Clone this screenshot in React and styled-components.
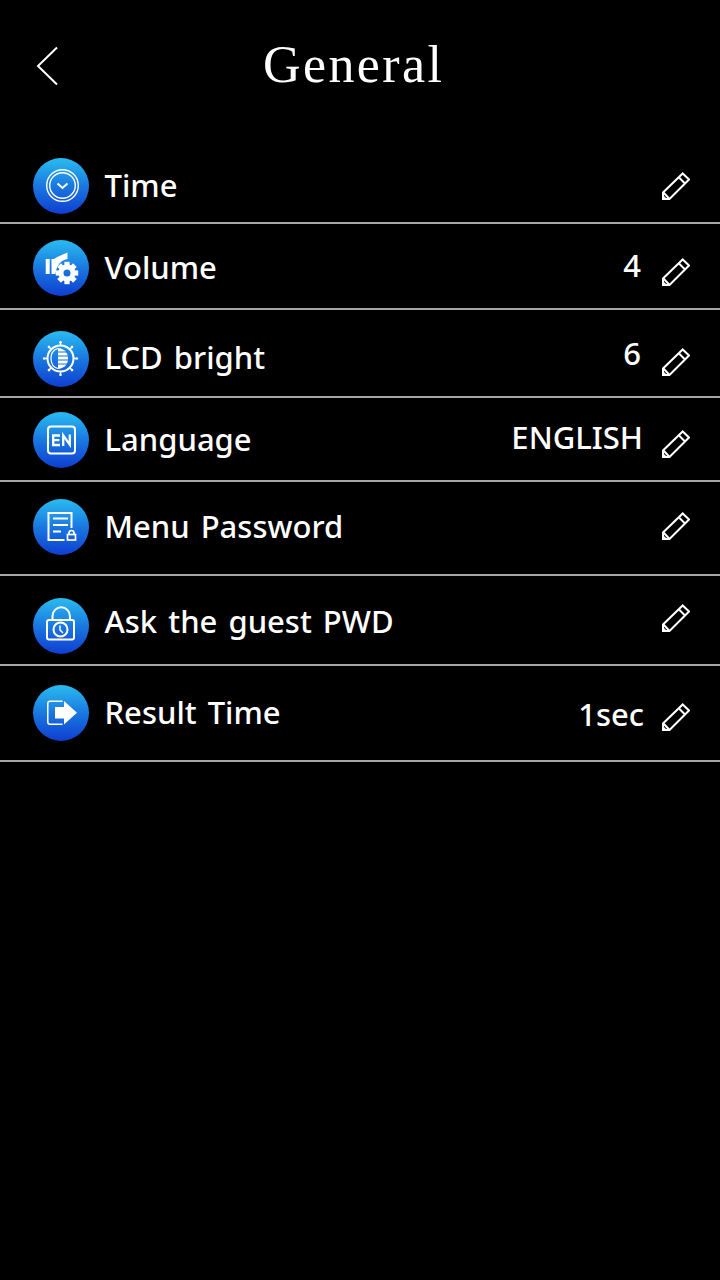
import * as React from "react"
import styled, { createGlobalStyle } from "styled-components"

const Global = createGlobalStyle`
    html, body {
        margin: 0;
        padding: 0;
        background: #000;
    }
`

const Screen = styled.div`
    width: 720px;
    height: 1280px;
    background: #000;
    color: #fff;
    font-family: "Noto Sans", "Open Sans", sans-serif;
    overflow: hidden;
`

const Header = styled.header`
    height: 140px;
    display: flex;
    align-items: flex-start;
    padding-left: 36px;
`

const BackIcon = styled.svg`
    width: 22px;
    height: 40px;
    margin-top: 46px;
    flex: none;
`

const Title = styled.h1`
    margin: 35px 0 0 205px;
    font-family: "Liberation Serif", serif;
    font-weight: 400;
    font-size: 52px;
    line-height: 60px;
    letter-spacing: 2.4px;
    white-space: nowrap;
`

const Row = styled.div`
    height: ${p => p.$height}px;
    border-bottom: 2px solid #a6a6a6;
    display: flex;
    align-items: flex-start;
    padding: 0 30px 0 32.5px;
`

const Badge = styled.div`
    width: 56px;
    height: 56px;
    margin-top: ${p => p.$top}px;
    border-radius: 50%;
    background: linear-gradient(180deg, #2abcf0 0%, #1a78e0 50%, #0f3ed0 100%);
    flex: none;
    svg {
        display: block;
        width: 56px;
        height: 56px;
    }
`

const Label = styled.span`
    margin: ${p => p.$top}px 0 0 16px;
    font-size: 31px;
    font-weight: 500;
    line-height: 40px;
    word-spacing: 3px;
    white-space: nowrap;
`

const Value = styled.span`
    margin: ${p => p.$top}px ${p => p.$gap}px 0 auto;
    font-size: 31px;
    font-weight: 500;
    line-height: 40px;
    white-space: nowrap;
`

const Pencil = styled.svg`
    width: 28px;
    height: 28px;
    margin-top: ${p => p.$top}px;
    margin-left: ${p => (p.$alone ? "auto" : "0")};
    flex: none;
`

const line = { fill: "none", stroke: "#fff", strokeWidth: 2 }

const ClockIcon = () => (
    <svg viewBox="0 0 56 56">
        <circle cx="29.5" cy="27.5" r="15.8" {...line} strokeWidth="1.4" />
        <circle cx="29.5" cy="27.5" r="12.8" {...line} strokeWidth="1.4" />
        <path d="M24.5 25.5 L29.5 30 L34.5 25.5" {...line} />
    </svg>
)

const gearTeeth = [0, 45, 90, 135, 180, 225, 270, 315]

const VolumeIcon = () => (
    <svg viewBox="0 0 56 56">
        <path d="M12.7 19 H16.7 V34 H12.7 Z" fill="#fff" />
        <path d="M18.5 19 H21 C24 17 29 15 34.5 12.5 V19 C27 20.5 23.5 26 22.5 34 H18.5 Z" fill="#fff" />
        <g transform="translate(34 33)">
            {gearTeeth.map(a => (
                <rect key={a} x="-2.6" y="-11.2" width="5.2" height="5" fill="#fff" transform={`rotate(${a})`} />
            ))}
            <circle r="6" fill="none" stroke="#fff" strokeWidth="5" />
        </g>
    </svg>
)

const sunRays = [0, 45, 90, 135, 180, 225, 270, 315]

const BrightIcon = () => (
    <svg viewBox="0 0 56 56">
        {sunRays.map(a => (
            <g key={a} transform={`rotate(${a} 27.5 27.5)`}>
                <path d="M27.5 14.5 V11.5" {...line} strokeWidth="1.5" />
                <circle cx="27.5" cy="11.2" r="1.3" fill="#fff" />
            </g>
        ))}
        <circle cx="27.5" cy="27.5" r="13" {...line} />
        <path d="M25 17.5 C19 19 18 23 18 27.5 C18 32 19 36 25 37.5" {...line} strokeWidth="1.2" />
        <path d="M25 17 C33 18 35 23 35 27.5 C35 32 33 37 25 38 Z" fill="#fff" />
        <path d="M25 21 H35 M25 25 H35 M25 29 H35 M25 33 H35" {...line} stroke="#1a70de" strokeWidth="1.2" />
    </svg>
)

const LangIcon = () => (
    <svg viewBox="0 0 56 56">
        <rect x="15" y="14.5" width="27" height="27" rx="3" {...line} />
        <path d="M27 23.5 H20.2 V33 H27 M20.2 28.2 H26.4" {...line} strokeWidth="2.3" />
        <path d="M30.2 34 V23.4 L36.8 32.6 V22.5" {...line} strokeWidth="2.3" />
    </svg>
)

const PasswordIcon = () => (
    <svg viewBox="0 0 56 56">
        <path d="M31.5 41 H15.5 V14 H38.5 V29" {...line} />
        <path d="M20 19.5 H35 M20 26 H35 M20 32.5 H28" {...line} />
        <rect x="34.5" y="35.5" width="8" height="5.5" {...line} strokeWidth="1.7" />
        <path d="M36 35.5 V34 A2.5 2.5 0 0 1 41 34 V35.5" {...line} strokeWidth="1.7" />
    </svg>
)

const GuestIcon = () => (
    <svg viewBox="0 0 56 56">
        <path d="M19.5 22 V18 A8.7 8.7 0 0 1 36.9 18 V22" {...line} />
        <rect x="14" y="22" width="27" height="19.5" rx="2" {...line} />
        <circle cx="27.5" cy="31.5" r="7" {...line} />
        <path d="M27 27.5 V32 L30 35" {...line} strokeWidth="1.5" />
    </svg>
)

const ResultIcon = () => (
    <svg viewBox="0 0 56 56">
        <path d="M29.5 16.3 H17 Q14.8 16.3 14.8 18.5 V37 Q14.8 39.2 17 39.2 H29.5" {...line} strokeWidth="1.5" />
        <path d="M22 22 H31 V16 L44 27.7 L31 39.5 V33.5 H22 Z" fill="#fff" />
    </svg>
)

const BackChevron = () => (
    <BackIcon viewBox="0 0 22 40">
        <path d="M21 1.5 L2 20 L21 38.5" fill="none" stroke="#fff" strokeWidth="2" />
    </BackIcon>
)

const EditPencil = ({ top, alone }) => (
    <Pencil viewBox="0 0 28 28" $top={top} $alone={alone}>
        <path d="M1 27 V20.5 L20.7 1.5 L27 7.5 L7.5 27 Z" fill="none" stroke="#fff" strokeWidth="2" />
        <path d="M17 5.5 L23 11.5 M1.5 20.5 L7.5 27" fill="none" stroke="#fff" strokeWidth="2" />
        <path d="M1 27 V23 L5 27 Z" fill="#fff" />
    </Pencil>
)

const items = [
    { name: "Time", Icon: ClockIcon, height: 82, iconTop: 18, labelTop: 25, penTop: 32 },
    { name: "Volume", Icon: VolumeIcon, height: 84, iconTop: 16, labelTop: 23, value: "4", valueTop: 21, valueGap: 21, penTop: 34 },
    { name: "LCD bright", Icon: BrightIcon, height: 86, iconTop: 21, labelTop: 27, value: "6", valueTop: 23, valueGap: 21, penTop: 38 },
    { name: "Language", Icon: LangIcon, height: 82, iconTop: 14, labelTop: 21, value: "ENGLISH", valueTop: 19, valueGap: 19, penTop: 32 },
    { name: "Menu Password", Icon: PasswordIcon, height: 92, iconTop: 17, labelTop: 24, penTop: 30 },
    { name: "Ask the guest PWD", Icon: GuestIcon, height: 88, iconTop: 22, labelTop: 25, penTop: 28 },
    { name: "Result Time", Icon: ResultIcon, height: 94, iconTop: 19, labelTop: 26, value: "1sec", valueTop: 28, valueGap: 18, penTop: 37 },
]

const App = () => {
    return (
        <>
            <Global />
            <Screen>
                <Header>
                    <BackChevron />
                    <Title>General</Title>
                </Header>
                {items.map(({ name, Icon, height, iconTop, labelTop, value, valueTop, valueGap, penTop }) => (
                    <Row key={name} $height={height}>
                        <Badge $top={iconTop}>
                            <Icon />
                        </Badge>
                        <Label $top={labelTop}>{name}</Label>
                        {value && <Value $top={valueTop} $gap={valueGap}>{value}</Value>}
                        <EditPencil top={penTop} alone={!value} />
                    </Row>
                ))}
            </Screen>
        </>
    )
}

export default App
